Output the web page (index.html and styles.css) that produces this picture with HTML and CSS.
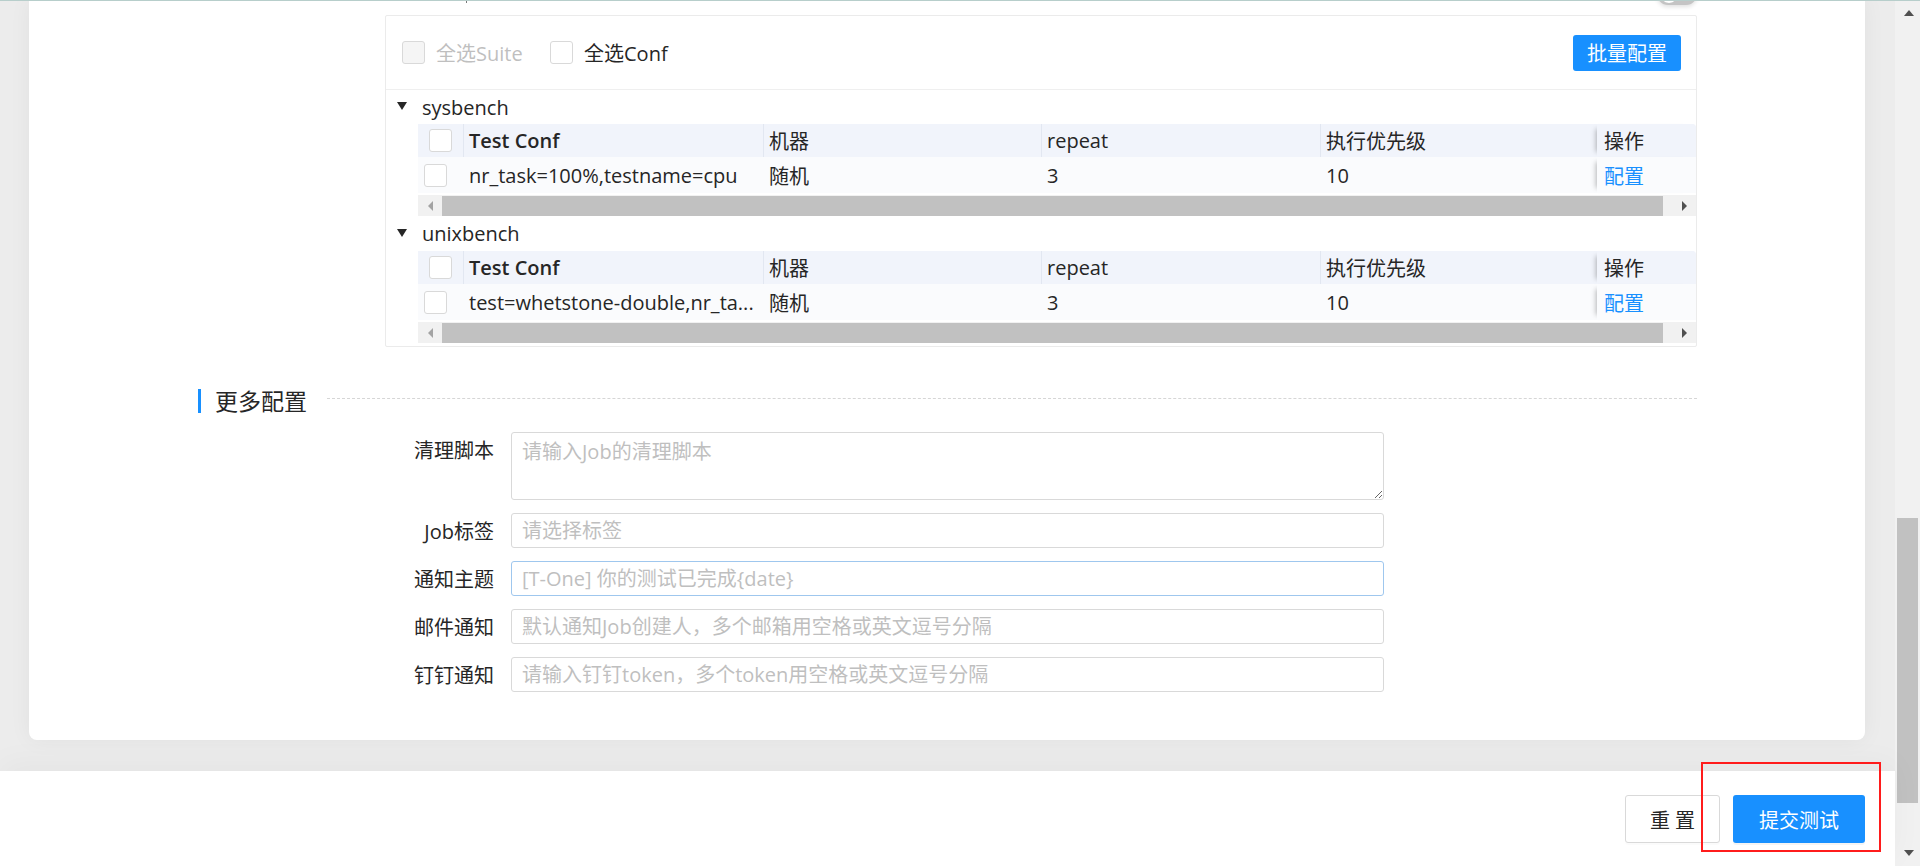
FILE: index.html
```html
<!DOCTYPE html>
<html lang="zh-CN">
<head>
<meta charset="utf-8">
<title>提交测试</title>
<link rel="stylesheet" href="styles.css">
</head>
<body>
<div class="topline"></div>
<div class="app">
  <div class="viewport">
    <div class="content">
      <div class="card">
        <div class="clip-row">
          <span class="dot"></span>
          <span class="switch"></span>
        </div>

        <div class="suite-box">
          <div class="box-head">
            <label class="check-item first disabled"><span class="cb cb-disabled"></span><span>全选Suite</span></label>
            <label class="check-item"><span class="cb"></span><span>全选Conf</span></label>
            <button class="btn-primary btn-sm" type="button">批量配置</button>
          </div>
          <div class="box-body">
            <div class="group">
              <div class="gtitle"><span class="caret"></span><span>sysbench</span></div>
              <div class="tbl">
                <div class="tr thead">
                  <div class="td c0 pad-cb-h"><span class="cb"></span></div>
                  <div class="td c1 sep strong">Test Conf</div>
                  <div class="td c2 sep">机器</div>
                  <div class="td c3 sep">repeat</div>
                  <div class="td c4 sep">执行优先级</div>
                  <div class="td c5 fixed">操作</div>
                </div>
                <div class="tr trow">
                  <div class="td c0"><span class="cb"></span></div>
                  <div class="td c1">nr_task=100%,testname=cpu</div>
                  <div class="td c2">随机</div>
                  <div class="td c3">3</div>
                  <div class="td c4">10</div>
                  <div class="td c5 fixed link">配置</div>
                </div>
                <div class="hscroll">
                  <span class="hs-btn"><span class="tri-left"></span></span>
                  <span class="hs-thumb"></span>
                  <span class="hs-btn end"><span class="tri-right"></span></span>
                </div>
              </div>
            </div>
            <div class="group">
              <div class="gtitle"><span class="caret"></span><span>unixbench</span></div>
              <div class="tbl">
                <div class="tr thead">
                  <div class="td c0 pad-cb-h"><span class="cb"></span></div>
                  <div class="td c1 sep strong">Test Conf</div>
                  <div class="td c2 sep">机器</div>
                  <div class="td c3 sep">repeat</div>
                  <div class="td c4 sep">执行优先级</div>
                  <div class="td c5 fixed">操作</div>
                </div>
                <div class="tr trow">
                  <div class="td c0"><span class="cb"></span></div>
                  <div class="td c1">test=whetstone-double,nr_ta...</div>
                  <div class="td c2">随机</div>
                  <div class="td c3">3</div>
                  <div class="td c4">10</div>
                  <div class="td c5 fixed link">配置</div>
                </div>
                <div class="hscroll">
                  <span class="hs-btn"><span class="tri-left"></span></span>
                  <span class="hs-thumb"></span>
                  <span class="hs-btn end"><span class="tri-right"></span></span>
                </div>
              </div>
            </div>
          </div>
        </div>

        <div class="section-title">
          <span class="bar"></span>
          <span class="stext">更多配置</span>
          <span class="dash"></span>
        </div>

        <div class="form">
          <div class="frow">
            <label class="flabel">清理脚本</label>
            <textarea class="ftextarea" placeholder="请输入Job的清理脚本"></textarea>
          </div>
          <div class="frow">
            <label class="flabel">Job标签</label>
            <input class="finput" placeholder="请选择标签">
          </div>
          <div class="frow">
            <label class="flabel">通知主题</label>
            <input class="finput focused" placeholder="[T-One] 你的测试已完成{date}">
          </div>
          <div class="frow">
            <label class="flabel">邮件通知</label>
            <input class="finput" placeholder="默认通知Job创建人，多个邮箱用空格或英文逗号分隔">
          </div>
          <div class="frow">
            <label class="flabel">钉钉通知</label>
            <input class="finput" placeholder="请输入钉钉token，多个token用空格或英文逗号分隔">
          </div>
        </div>
      </div>
    </div>
    <div class="footer">
      <button class="btn-default" type="button">重 置</button>
      <button class="btn-primary btn-lg" type="button">提交测试</button>
    </div>
  </div>
  <div class="vscroll">
    <span class="vs-btn"><span class="tri-up"></span></span>
    <span class="vs-gap"></span>
    <span class="vs-thumb"></span>
    <span class="vs-fill"></span>
    <span class="vs-btn"><span class="tri-down"></span></span>
  </div>
</div>
<div class="annot"></div>
</body>
</html>
```

FILE: styles.css
```css
* { box-sizing: border-box; }
html, body { margin: 0; height: 100%; overflow: hidden; }
body {
  font-family: "Open Sans", "Noto Sans CJK SC", sans-serif;
  font-size: 20px;
  color: #262626;
  background: #fff;
}

.topline {
  position: absolute;
  top: 0; left: 0; right: 0;
  height: 1px;
  background: #b7cecb;
  z-index: 5;
}

.app { display: flex; height: 866px; }
.viewport { flex: 1; display: flex; flex-direction: column; min-width: 0; }

.content {
  height: 771px;
  background: #ececec;
  padding: 0 30px 0 29px;
}

.card {
  background: #fff;
  height: 740px;
  border-radius: 0 0 8px 8px;
  box-shadow: 0 0 22px rgba(0, 0, 0, 0.05);
  padding-bottom: 48px;
}

.clip-row {
  margin-left: 356px;
  width: 1312px;
  height: 15px;
  display: flex;
  justify-content: space-between;
  align-items: flex-start;
}
.dot { margin-left: 81px; width: 1px; height: 3px; background: #777; }
.switch {
  position: relative;
  width: 40px; height: 22px;
  margin-top: -17px;
  border-radius: 11px;
  background: #c4c4c4;
  box-shadow: 0 2px 4px rgba(0,0,0,0.12);
}
.switch::after {
  content: "";
  position: absolute;
  left: 3px; top: 2px;
  width: 18px; height: 18px;
  border-radius: 50%;
  background: #fff;
}

.suite-box {
  margin-left: 356px;
  width: 1312px;
  height: 332px;
  border: 1px solid #ebebeb;
  border-radius: 2px;
}
.box-head {
  height: 74px;
  border-bottom: 1px solid #efefef;
  display: flex;
  align-items: center;
  padding: 0 15px 0 16px;
}
.check-item { display: flex; align-items: center; gap: 11px; }
.check-item.first { width: 148px; }
.check-item.disabled { color: #bfbfbf; }

.cb {
  display: inline-block;
  width: 23px; height: 23px;
  border: 1px solid #d9d9d9;
  border-radius: 3px;
  background: #fff;
  flex: none;
}
.cb-disabled { background: #f5f5f5; }

.btn-primary {
  font-family: inherit;
  font-size: 20px;
  color: #fff;
  background: #1890ff;
  border: none;
  border-radius: 3px;
}
.btn-sm { margin-left: auto; height: 36px; padding: 0 14px; }

.box-body { padding: 0 0 3px 11px; }
.gtitle {
  height: 34px;
  display: flex;
  align-items: center;
  gap: 15px;
}
.group + .group .gtitle { height: 35px; }
.caret {
  width: 0; height: 0;
  border-left: 5px solid transparent;
  border-right: 5px solid transparent;
  border-top: 8px solid #262626;
  margin-top: -2px;
}

.tbl { margin-left: 21px; width: 1278px; }
.tr { display: flex; }
.thead { height: 33px; background: #f1f4fb; border-radius: 0 4px 0 0; }
.trow { height: 36px; background: #fafbfd; }
.td {
  display: flex;
  align-items: center;
  padding-left: 6px;
  white-space: nowrap;
  overflow: hidden;
}
.c0 { width: 45px; }
.c1 { width: 300px; }
.c2 { width: 278px; }
.c3 { width: 279px; }
.c4 { width: 277px; }
.c5 { width: 99px; }
.pad-cb-h { padding-left: 11px; }
.sep { border-left: 1px solid #e2e7f1; padding-left: 5px; }
.strong { font-weight: 600; }
.fixed {
  position: relative;
  padding-left: 7px;
  overflow: visible;
  box-shadow: -6px 0 5px -5px rgba(0, 0, 0, 0.28);
}
.thead .fixed { background: #f1f4fb; border-radius: 0 4px 0 0; }
.trow .fixed { background: #fafbfd; }
.link { color: #1890ff; }

.hscroll {
  margin-top: 2px;
  height: 21px;
  display: flex;
  align-items: stretch;
  background: #f1f1f1;
}
.hs-btn { width: 24px; display: flex; align-items: center; justify-content: center; }
.hs-btn.end { margin-left: auto; }
.hs-thumb { width: 1221px; background: #c1c1c1; margin: 1px 0 0; }
.tri-left {
  width: 0; height: 0;
  border-top: 5px solid transparent;
  border-bottom: 5px solid transparent;
  border-right: 5px solid #a3a3a3;
}
.tri-right {
  width: 0; height: 0;
  border-top: 5px solid transparent;
  border-bottom: 5px solid transparent;
  border-left: 5px solid #505050;
}

.section-title {
  margin: 42px 0 0 169px;
  width: 1499px;
  height: 24px;
  display: flex;
  align-items: center;
}
.bar { width: 3px; height: 24px; background: #1890ff; flex: none; }
.stext { margin-left: 14px; font-size: 23px; line-height: 24px; color: #262626; }
.dash { flex: 1; margin: 0 0 5px 20px; border-top: 1px dashed #d6d6d6; }

.form { margin: 19px 0 0 356px; }
.frow { display: flex; align-items: flex-start; margin-top: 13px; }
.frow:first-child { margin-top: 0; }
.flabel {
  width: 109px;
  text-align: right;
  line-height: 37px;
  height: 35px;
  margin-right: 17px;
  color: #262626;
  white-space: nowrap;
}
.finput, .ftextarea {
  width: 873px;
  font-family: inherit;
  font-size: 20px;
  color: #262626;
  border: 1px solid #d9d9d9;
  border-radius: 3px;
  background: #fff;
  outline: none;
}
.finput { height: 35px; padding: 0 10px; }
.ftextarea { height: 68px; padding: 4px 10px; line-height: 30px; resize: vertical; display: block; }
.finput.focused { border-color: #9fc7ee; }
.finput::placeholder, .ftextarea::placeholder { color: #bfbfbf; }

.footer {
  position: relative;
  z-index: 2;
  height: 95px;
  background: #fff;
  display: flex;
  justify-content: flex-end;
  align-items: flex-start;
  gap: 13px;
  padding: 24px 30px 0 0;
  box-shadow: 0 -8px 30px rgba(0, 0, 0, 0.035);
}
.btn-default {
  height: 48px;
  width: 95px;
  font-family: inherit;
  font-size: 20px;
  color: #262626;
  background: #fff;
  border: 1px solid #d9d9d9;
  border-radius: 3px;
  box-shadow: 0 2px 0 rgba(0,0,0,0.015);
}
.btn-lg { height: 48px; width: 132px; box-shadow: 0 2px 0 rgba(0,0,0,0.045); }

.vscroll {
  width: 25px;
  background: #f1f1f1;
  display: flex;
  flex-direction: column;
}
.vs-btn { height: 26px; display: flex; align-items: center; justify-content: center; padding-left: 2px; }
.vs-gap { height: 492px; }
.vs-thumb { height: 285px; width: 21px; margin-left: 2px; background: #c1c1c1; }
.vs-fill { flex: 1; }
.tri-up {
  width: 0; height: 0;
  border-left: 5px solid transparent;
  border-right: 5px solid transparent;
  border-bottom: 6px solid #505050;
}
.tri-down {
  width: 0; height: 0;
  border-left: 5px solid transparent;
  border-right: 5px solid transparent;
  border-top: 6px solid #505050;
}

.annot {
  position: absolute;
  left: 1701px;
  top: 762px;
  width: 180px;
  height: 90px;
  border: 2px solid #ff1c1c;
  pointer-events: none;
  z-index: 10;
}
```
